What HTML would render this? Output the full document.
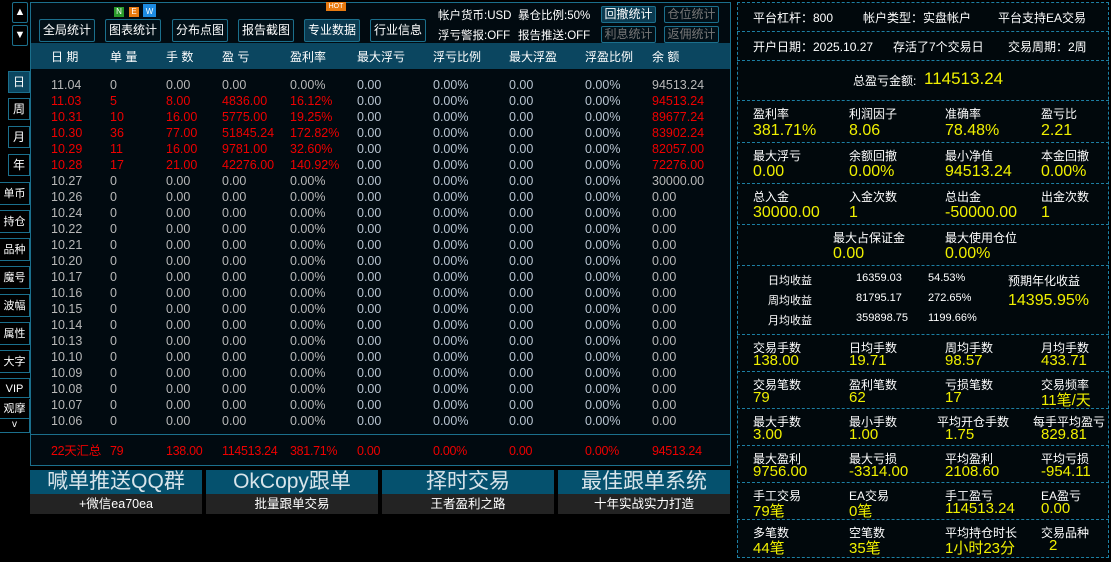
<!DOCTYPE html><html><head><meta charset="utf-8"><style>
*{margin:0;padding:0;box-sizing:border-box}
body{width:1111px;height:562px;background:#000;position:relative;overflow:hidden;font-family:"Liberation Sans","Noto Sans CJK SC",sans-serif;font-size:12px;color:#d0d0d0}
.a{position:absolute;white-space:nowrap}
.btn{position:absolute;border:1px solid #1b6f8c;background:#021018;color:#fff;font-size:12px;text-align:center;line-height:20px;border-radius:2px}
.sb{position:absolute;left:0;width:30px;border-right:1px solid #1b6f8c;border-bottom:1px solid #1b6f8c;color:#fff;text-align:center;font-size:11px}
.box{position:absolute;left:8px;width:22px;height:22px;border:1px solid #1b6f8c;color:#fff;text-align:center;line-height:20px;font-size:12px}
#main{position:absolute;left:30px;top:2px;width:701px;height:464px;border:1px solid #1b6f8c;background:#010a10}
.hdr{position:absolute;left:31px;top:43px;width:699px;height:26px;background:#0b4660}
.row{position:absolute;left:0;height:16px;width:700px;font-size:12.5px;line-height:16px}
.row span{position:absolute}
.g{color:#b8b8b8}.r{color:#ee0000}.b{color:#b8c4d0}
.c1{left:51px}.c2{left:110px}.c3{left:166px}.c4{left:222px}.c5{left:290px}.c6{left:357px}.c7{left:433px}.c8{left:509px}.c9{left:585px}.c10{left:652px}
.h span{color:#fff;font-size:12px}
#rp{position:absolute;left:737px;top:2px;width:372px;height:556px;border:1px dashed #1d7fa3;background:#01080c}
.hl{position:absolute;left:737px;width:372px;border-top:1px dashed #1d7fa3}
.lb{position:absolute;color:#fff;font-size:12px;white-space:nowrap}
.v{position:absolute;color:#f0f000;font-size:16px;white-space:nowrap}
.ban{position:absolute;top:470px;width:172px;height:44px}
.ban .t{height:24px;background:#05516e;color:#d8e4ea;font-size:21px;text-align:center;line-height:24px}
.ban .s{height:20px;background:#232323;color:#fff;font-size:12.5px;text-align:center;line-height:20px}
</style></head><body>
<div class="box" style="left:12px;top:2px;width:16px;height:21px;font-size:11px;line-height:19px;border-radius:2px">▲</div>
<div class="box" style="left:12px;top:25px;width:16px;height:21px;font-size:11px;line-height:19px;border-radius:2px">▼</div>
<div class="box" style="top:71px;background:#0b4660">日</div>
<div class="box" style="top:98px">周</div>
<div class="box" style="top:126px">月</div>
<div class="box" style="top:154px">年</div>
<div class="sb" style="top:182px;height:23px;line-height:22px;border-top:1px solid #1b6f8c">单币</div>
<div class="sb" style="top:210px;height:23px;line-height:22px;border-top:1px solid #1b6f8c">持仓</div>
<div class="sb" style="top:238px;height:23px;line-height:22px;border-top:1px solid #1b6f8c">品种</div>
<div class="sb" style="top:266px;height:23px;line-height:22px;border-top:1px solid #1b6f8c">魔号</div>
<div class="sb" style="top:294px;height:23px;line-height:22px;border-top:1px solid #1b6f8c">波幅</div>
<div class="sb" style="top:322px;height:23px;line-height:22px;border-top:1px solid #1b6f8c">属性</div>
<div class="sb" style="top:350px;height:23px;line-height:22px;border-top:1px solid #1b6f8c">大字</div>
<div class="sb" style="top:378px;height:20px;line-height:20px;border-top:1px solid #1b6f8c">VIP</div>
<div class="sb" style="top:399px;height:20px;line-height:20px">观摩</div>
<div class="sb" style="top:419px;height:14px;line-height:12px;font-size:10px">v</div>

<div id="main"></div>
<div class="btn" style="left:39px;top:19px;width:56px;height:23px">全局统计</div>
<div class="btn" style="left:105px;top:19px;width:56px;height:23px">图表统计</div>
<div class="a" style="left:114px;top:7px;width:10px;height:10px;background:#2a9a2a;color:#fff;font-size:8px;text-align:center;line-height:10px">N</div>
<div class="a" style="left:129px;top:7px;width:10px;height:10px;background:#e87a10;color:#fff;font-size:8px;text-align:center;line-height:10px">E</div>
<div class="a" style="left:143px;top:4px;width:13px;height:13px;background:#1d8ae0;color:#fff;font-size:8px;text-align:center;line-height:15px">W</div>
<div class="btn" style="left:172px;top:19px;width:56px;height:23px">分布点图</div>
<div class="btn" style="left:238px;top:19px;width:56px;height:23px">报告截图</div>
<div class="btn" style="left:304px;top:19px;width:56px;height:23px;background:#0b3a50">专业数据</div>
<div class="a" style="left:326px;top:2px;width:20px;height:9px;background:#e87a10;color:#fff;font-size:7px;text-align:center;line-height:9px">HOT</div>
<div class="btn" style="left:370px;top:19px;width:56px;height:23px">行业信息</div>
<div class="a" style="left:438px;top:7px;color:#fff;font-size:11.5px">帐户货币:USD</div>
<div class="a" style="left:518px;top:7px;color:#fff;font-size:11.5px">暴仓比例:50%</div>
<div class="a" style="left:438px;top:27px;color:#fff;font-size:11.5px">浮亏警报:OFF</div>
<div class="a" style="left:518px;top:27px;color:#fff;font-size:11.5px">报告推送:OFF</div>
<div class="btn" style="left:601px;top:6px;width:55px;height:17px;line-height:15px;background:#0b3a50">回撤统计</div>
<div class="btn" style="left:664px;top:6px;width:55px;height:17px;line-height:15px;color:#777">仓位统计</div>
<div class="btn" style="left:601px;top:26px;width:55px;height:17px;line-height:15px;color:#777">利息统计</div>
<div class="btn" style="left:664px;top:26px;width:55px;height:17px;line-height:15px;color:#777">返佣统计</div>

<div class="hdr"></div>
<div class="row h" style="top:49px"><span class="c1">日 期</span><span class="c2">单 量</span><span class="c3">手 数</span><span class="c4">盈 亏</span><span class="c5">盈利率</span><span class="c6">最大浮亏</span><span class="c7">浮亏比例</span><span class="c8">最大浮盈</span><span class="c9">浮盈比例</span><span class="c10">余 额</span></div>

<div class="row g" style="top:77px"><span class="c1">11.04</span><span class="c2">0</span><span class="c3">0.00</span><span class="c4">0.00</span><span class="c5">0.00%</span><span class="c6 b">0.00</span><span class="c7 b">0.00%</span><span class="c8 b">0.00</span><span class="c9 b">0.00%</span><span class="c10">94513.24</span></div>
<div class="row r" style="top:93px"><span class="c1">11.03</span><span class="c2">5</span><span class="c3">8.00</span><span class="c4">4836.00</span><span class="c5">16.12%</span><span class="c6 b">0.00</span><span class="c7 b">0.00%</span><span class="c8 b">0.00</span><span class="c9 b">0.00%</span><span class="c10">94513.24</span></div>
<div class="row r" style="top:109px"><span class="c1">10.31</span><span class="c2">10</span><span class="c3">16.00</span><span class="c4">5775.00</span><span class="c5">19.25%</span><span class="c6 b">0.00</span><span class="c7 b">0.00%</span><span class="c8 b">0.00</span><span class="c9 b">0.00%</span><span class="c10">89677.24</span></div>
<div class="row r" style="top:125px"><span class="c1">10.30</span><span class="c2">36</span><span class="c3">77.00</span><span class="c4">51845.24</span><span class="c5">172.82%</span><span class="c6 b">0.00</span><span class="c7 b">0.00%</span><span class="c8 b">0.00</span><span class="c9 b">0.00%</span><span class="c10">83902.24</span></div>
<div class="row r" style="top:141px"><span class="c1">10.29</span><span class="c2">11</span><span class="c3">16.00</span><span class="c4">9781.00</span><span class="c5">32.60%</span><span class="c6 b">0.00</span><span class="c7 b">0.00%</span><span class="c8 b">0.00</span><span class="c9 b">0.00%</span><span class="c10">82057.00</span></div>
<div class="row r" style="top:157px"><span class="c1">10.28</span><span class="c2">17</span><span class="c3">21.00</span><span class="c4">42276.00</span><span class="c5">140.92%</span><span class="c6 b">0.00</span><span class="c7 b">0.00%</span><span class="c8 b">0.00</span><span class="c9 b">0.00%</span><span class="c10">72276.00</span></div>
<div class="row g" style="top:173px"><span class="c1">10.27</span><span class="c2">0</span><span class="c3">0.00</span><span class="c4">0.00</span><span class="c5">0.00%</span><span class="c6 b">0.00</span><span class="c7 b">0.00%</span><span class="c8 b">0.00</span><span class="c9 b">0.00%</span><span class="c10">30000.00</span></div>
<div class="row g" style="top:189px"><span class="c1">10.26</span><span class="c2">0</span><span class="c3">0.00</span><span class="c4">0.00</span><span class="c5">0.00%</span><span class="c6 b">0.00</span><span class="c7 b">0.00%</span><span class="c8 b">0.00</span><span class="c9 b">0.00%</span><span class="c10">0.00</span></div>
<div class="row g" style="top:205px"><span class="c1">10.24</span><span class="c2">0</span><span class="c3">0.00</span><span class="c4">0.00</span><span class="c5">0.00%</span><span class="c6 b">0.00</span><span class="c7 b">0.00%</span><span class="c8 b">0.00</span><span class="c9 b">0.00%</span><span class="c10">0.00</span></div>
<div class="row g" style="top:221px"><span class="c1">10.22</span><span class="c2">0</span><span class="c3">0.00</span><span class="c4">0.00</span><span class="c5">0.00%</span><span class="c6 b">0.00</span><span class="c7 b">0.00%</span><span class="c8 b">0.00</span><span class="c9 b">0.00%</span><span class="c10">0.00</span></div>
<div class="row g" style="top:237px"><span class="c1">10.21</span><span class="c2">0</span><span class="c3">0.00</span><span class="c4">0.00</span><span class="c5">0.00%</span><span class="c6 b">0.00</span><span class="c7 b">0.00%</span><span class="c8 b">0.00</span><span class="c9 b">0.00%</span><span class="c10">0.00</span></div>
<div class="row g" style="top:253px"><span class="c1">10.20</span><span class="c2">0</span><span class="c3">0.00</span><span class="c4">0.00</span><span class="c5">0.00%</span><span class="c6 b">0.00</span><span class="c7 b">0.00%</span><span class="c8 b">0.00</span><span class="c9 b">0.00%</span><span class="c10">0.00</span></div>
<div class="row g" style="top:269px"><span class="c1">10.17</span><span class="c2">0</span><span class="c3">0.00</span><span class="c4">0.00</span><span class="c5">0.00%</span><span class="c6 b">0.00</span><span class="c7 b">0.00%</span><span class="c8 b">0.00</span><span class="c9 b">0.00%</span><span class="c10">0.00</span></div>
<div class="row g" style="top:285px"><span class="c1">10.16</span><span class="c2">0</span><span class="c3">0.00</span><span class="c4">0.00</span><span class="c5">0.00%</span><span class="c6 b">0.00</span><span class="c7 b">0.00%</span><span class="c8 b">0.00</span><span class="c9 b">0.00%</span><span class="c10">0.00</span></div>
<div class="row g" style="top:301px"><span class="c1">10.15</span><span class="c2">0</span><span class="c3">0.00</span><span class="c4">0.00</span><span class="c5">0.00%</span><span class="c6 b">0.00</span><span class="c7 b">0.00%</span><span class="c8 b">0.00</span><span class="c9 b">0.00%</span><span class="c10">0.00</span></div>
<div class="row g" style="top:317px"><span class="c1">10.14</span><span class="c2">0</span><span class="c3">0.00</span><span class="c4">0.00</span><span class="c5">0.00%</span><span class="c6 b">0.00</span><span class="c7 b">0.00%</span><span class="c8 b">0.00</span><span class="c9 b">0.00%</span><span class="c10">0.00</span></div>
<div class="row g" style="top:333px"><span class="c1">10.13</span><span class="c2">0</span><span class="c3">0.00</span><span class="c4">0.00</span><span class="c5">0.00%</span><span class="c6 b">0.00</span><span class="c7 b">0.00%</span><span class="c8 b">0.00</span><span class="c9 b">0.00%</span><span class="c10">0.00</span></div>
<div class="row g" style="top:349px"><span class="c1">10.10</span><span class="c2">0</span><span class="c3">0.00</span><span class="c4">0.00</span><span class="c5">0.00%</span><span class="c6 b">0.00</span><span class="c7 b">0.00%</span><span class="c8 b">0.00</span><span class="c9 b">0.00%</span><span class="c10">0.00</span></div>
<div class="row g" style="top:365px"><span class="c1">10.09</span><span class="c2">0</span><span class="c3">0.00</span><span class="c4">0.00</span><span class="c5">0.00%</span><span class="c6 b">0.00</span><span class="c7 b">0.00%</span><span class="c8 b">0.00</span><span class="c9 b">0.00%</span><span class="c10">0.00</span></div>
<div class="row g" style="top:381px"><span class="c1">10.08</span><span class="c2">0</span><span class="c3">0.00</span><span class="c4">0.00</span><span class="c5">0.00%</span><span class="c6 b">0.00</span><span class="c7 b">0.00%</span><span class="c8 b">0.00</span><span class="c9 b">0.00%</span><span class="c10">0.00</span></div>
<div class="row g" style="top:397px"><span class="c1">10.07</span><span class="c2">0</span><span class="c3">0.00</span><span class="c4">0.00</span><span class="c5">0.00%</span><span class="c6 b">0.00</span><span class="c7 b">0.00%</span><span class="c8 b">0.00</span><span class="c9 b">0.00%</span><span class="c10">0.00</span></div>
<div class="row g" style="top:413px"><span class="c1">10.06</span><span class="c2">0</span><span class="c3">0.00</span><span class="c4">0.00</span><span class="c5">0.00%</span><span class="c6 b">0.00</span><span class="c7 b">0.00%</span><span class="c8 b">0.00</span><span class="c9 b">0.00%</span><span class="c10">0.00</span></div>
<div class="a" style="left:31px;top:434px;width:699px;border-top:1px solid #1b6f8c"></div>
<div class="row r" style="top:443px;letter-spacing:-0.3px"><span class="c1">22天汇总</span><span class="c2">79</span><span class="c3">138.00</span><span class="c4">114513.24</span><span class="c5">381.71%</span><span class="c6">0.00</span><span class="c7">0.00%</span><span class="c8">0.00</span><span class="c9">0.00%</span><span class="c10">94513.24</span></div>

<div class="ban" style="left:30px"><div class="t">喊单推送QQ群</div><div class="s">+微信ea70ea</div></div>
<div class="ban" style="left:206px"><div class="t">OkCopy跟单</div><div class="s">批量跟单交易</div></div>
<div class="ban" style="left:382px"><div class="t">择时交易</div><div class="s">王者盈利之路</div></div>
<div class="ban" style="left:558px"><div class="t">最佳跟单系统</div><div class="s">十年实战实力打造</div></div>

<div id="rp"></div>
<div class="hl" style="top:31px"></div><div class="hl" style="top:60px"></div><div class="hl" style="top:100px"></div><div class="hl" style="top:142px"></div><div class="hl" style="top:183px"></div><div class="hl" style="top:224px"></div><div class="hl" style="top:265px"></div><div class="hl" style="top:334px"></div><div class="hl" style="top:371px"></div><div class="hl" style="top:408px"></div><div class="hl" style="top:445px"></div><div class="hl" style="top:482px"></div><div class="hl" style="top:519px"></div>

<div class="lb" style="left:753px;top:9px">平台杠杆：800</div>
<div class="lb" style="left:863px;top:9px">帐户类型：实盘帐户</div>
<div class="lb" style="left:998px;top:9px">平台支持EA交易</div>
<div class="lb" style="left:753px;top:38px">开户日期：2025.10.27</div>
<div class="lb" style="left:893px;top:38px">存活了7个交易日</div>
<div class="lb" style="left:1008px;top:38px">交易周期：2周</div>
<div class="lb" style="left:853px;top:72px">总盈亏金额:</div>
<div class="v" style="left:924px;top:69px;font-size:17px">114513.24</div>

<div class="lb" style="left:753px;top:105px">盈利率</div><div class="v" style="left:753px;top:122px">381.71%</div>
<div class="lb" style="left:849px;top:105px">利润因子</div><div class="v" style="left:849px;top:122px">8.06</div>
<div class="lb" style="left:945px;top:105px">准确率</div><div class="v" style="left:945px;top:122px">78.48%</div>
<div class="lb" style="left:1041px;top:105px">盈亏比</div><div class="v" style="left:1041px;top:122px">2.21</div>

<div class="lb" style="left:753px;top:147px">最大浮亏</div><div class="v" style="left:753px;top:163px">0.00</div>
<div class="lb" style="left:849px;top:147px">余额回撤</div><div class="v" style="left:849px;top:163px">0.00%</div>
<div class="lb" style="left:945px;top:147px">最小净值</div><div class="v" style="left:945px;top:163px">94513.24</div>
<div class="lb" style="left:1041px;top:147px">本金回撤</div><div class="v" style="left:1041px;top:163px">0.00%</div>

<div class="lb" style="left:753px;top:188px">总入金</div><div class="v" style="left:753px;top:204px">30000.00</div>
<div class="lb" style="left:849px;top:188px">入金次数</div><div class="v" style="left:849px;top:204px">1</div>
<div class="lb" style="left:945px;top:188px">总出金</div><div class="v" style="left:945px;top:204px">-50000.00</div>
<div class="lb" style="left:1041px;top:188px">出金次数</div><div class="v" style="left:1041px;top:204px">1</div>

<div class="lb" style="left:833px;top:229px">最大占保证金</div><div class="v" style="left:833px;top:245px">0.00</div>
<div class="lb" style="left:945px;top:229px">最大使用仓位</div><div class="v" style="left:945px;top:245px">0.00%</div>

<div class="lb" style="left:768px;top:272px;font-size:11px">日均收益</div><div class="lb" style="left:856px;top:272px;font-size:11px">16359.03</div><div class="lb" style="left:928px;top:272px;font-size:11px">54.53%</div>
<div class="lb" style="left:768px;top:292px;font-size:11px">周均收益</div><div class="lb" style="left:856px;top:292px;font-size:11px">81795.17</div><div class="lb" style="left:928px;top:292px;font-size:11px">272.65%</div>
<div class="lb" style="left:768px;top:312px;font-size:11px">月均收益</div><div class="lb" style="left:856px;top:312px;font-size:11px">359898.75</div><div class="lb" style="left:928px;top:312px;font-size:11px">1199.66%</div>
<div class="lb" style="left:1008px;top:272px">预期年化收益</div><div class="v" style="left:1008px;top:292px">14395.95%</div>

<div class="lb" style="left:753px;top:339px">交易手数</div><div class="v" style="left:753px;top:352px;font-size:15px">138.00</div>
<div class="lb" style="left:849px;top:339px">日均手数</div><div class="v" style="left:849px;top:352px;font-size:15px">19.71</div>
<div class="lb" style="left:945px;top:339px">周均手数</div><div class="v" style="left:945px;top:352px;font-size:15px">98.57</div>
<div class="lb" style="left:1041px;top:339px">月均手数</div><div class="v" style="left:1041px;top:352px;font-size:15px">433.71</div>

<div class="lb" style="left:753px;top:376px">交易笔数</div><div class="v" style="left:753px;top:389px;font-size:15px">79</div>
<div class="lb" style="left:849px;top:376px">盈利笔数</div><div class="v" style="left:849px;top:389px;font-size:15px">62</div>
<div class="lb" style="left:945px;top:376px">亏损笔数</div><div class="v" style="left:945px;top:389px;font-size:15px">17</div>
<div class="lb" style="left:1041px;top:376px">交易频率</div><div class="v" style="left:1041px;top:389px;font-size:15px">11笔/天</div>

<div class="lb" style="left:753px;top:413px">最大手数</div><div class="v" style="left:753px;top:426px;font-size:15px">3.00</div>
<div class="lb" style="left:849px;top:413px">最小手数</div><div class="v" style="left:849px;top:426px;font-size:15px">1.00</div>
<div class="lb" style="left:937px;top:413px">平均开仓手数</div><div class="v" style="left:945px;top:426px;font-size:15px">1.75</div>
<div class="lb" style="left:1033px;top:413px">每手平均盈亏</div><div class="v" style="left:1041px;top:426px;font-size:15px">829.81</div>

<div class="lb" style="left:753px;top:450px">最大盈利</div><div class="v" style="left:753px;top:463px;font-size:15px">9756.00</div>
<div class="lb" style="left:849px;top:450px">最大亏损</div><div class="v" style="left:849px;top:463px;font-size:15px">-3314.00</div>
<div class="lb" style="left:945px;top:450px">平均盈利</div><div class="v" style="left:945px;top:463px;font-size:15px">2108.60</div>
<div class="lb" style="left:1041px;top:450px">平均亏损</div><div class="v" style="left:1041px;top:463px;font-size:15px">-954.11</div>

<div class="lb" style="left:753px;top:487px">手工交易</div><div class="v" style="left:753px;top:500px;font-size:15px">79笔</div>
<div class="lb" style="left:849px;top:487px">EA交易</div><div class="v" style="left:849px;top:500px;font-size:15px">0笔</div>
<div class="lb" style="left:945px;top:487px">手工盈亏</div><div class="v" style="left:945px;top:500px;font-size:15px">114513.24</div>
<div class="lb" style="left:1041px;top:487px">EA盈亏</div><div class="v" style="left:1041px;top:500px;font-size:15px">0.00</div>

<div class="lb" style="left:753px;top:524px">多笔数</div><div class="v" style="left:753px;top:537px;font-size:15px">44笔</div>
<div class="lb" style="left:849px;top:524px">空笔数</div><div class="v" style="left:849px;top:537px;font-size:15px">35笔</div>
<div class="lb" style="left:945px;top:524px">平均持仓时长</div><div class="v" style="left:945px;top:537px;font-size:15px">1小时23分</div>
<div class="lb" style="left:1041px;top:524px">交易品种</div><div class="v" style="left:1049px;top:537px;font-size:15px">2</div>
</body></html>
